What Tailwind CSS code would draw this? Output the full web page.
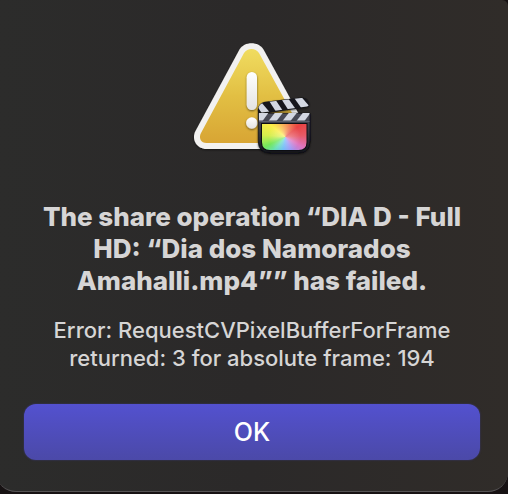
<!DOCTYPE html>
<html lang="en">
<head>
<meta charset="utf-8">
<meta name="viewport" content="width=device-width, initial-scale=1">
<title>Share failed</title>
<script src="https://cdn.jsdelivr.net/npm/@tailwindcss/browser@4"></script>
</head>
<body class="min-h-screen overflow-x-hidden bg-[#171213] font-[Inter,sans-serif]">
<main role="alertdialog" aria-labelledby="title" aria-describedby="message" class="-ml-1 flex flex-col items-center rounded-b-[20px] rounded-tr-[6px] border-b border-[#555354] bg-linear-to-r from-[#2c2c2b] via-[#2b2929] to-[#302c29] px-7 pt-[38px] pb-[31px] text-center text-[#d6d5d5]">
  <svg class="h-[124px] w-32" viewBox="188 38 128 124" aria-hidden="true">
    <defs>
      <linearGradient id="gold" x1="0" y1="0" x2="0" y2="1"><stop offset="0" stop-color="#f0dc60"/><stop offset=".5" stop-color="#e2bf43"/><stop offset="1" stop-color="#d8a534"/></linearGradient>
      <linearGradient id="mark" x1="0" y1="0" x2="0" y2="1"><stop offset="0" stop-color="#fff"/><stop offset="1" stop-color="#e4e3e2"/></linearGradient>
      <linearGradient id="slate" x1="0" y1="0" x2="0" y2="1"><stop offset="0" stop-color="#4c4e5b"/><stop offset=".4" stop-color="#393b45"/><stop offset="1" stop-color="#15161c"/></linearGradient>
      <filter id="shadow" x="-20%" y="-20%" width="140%" height="150%"><feDropShadow dx="0" dy="1" stdDeviation="1.2" flood-color="#000" flood-opacity=".55"/></filter>
      <clipPath id="arm"><path d="M258.500 112 C257.500 106.500 260 103.500 265 102.300 L301 98 C305 98 307.500 99.500 309 104 Q309 106 307 106.500 L262 112.500Z"/></clipPath>
      <clipPath id="bar"><path d="M259 113 H309.500 V120.500 H259Z"/></clipPath>
      <clipPath id="screen"><path d="M262 124 H306.500 V142 Q306.500 150 298.500 150 H270 Q262 150 262 142Z"/></clipPath>
    </defs>
    <g filter="url(#shadow)">
      <path fill="#f2f1f0" d="M239.500 49.500 C244.500 41.300 258.500 41.300 263.500 49.500 L308 131 C312.500 139.500 307 149 297.500 149 H206.500 C197 149 191 139.500 195.500 131Z"/>
    </g>
    <path fill="url(#gold)" d="M244 53 C247.500 47.700 255.500 47.700 259 53 L303 133 C305.500 138 302.500 143 297 143 H206.500 C201 143 198.300 138 201 133Z"/>
    <g filter="url(#shadow)"><rect x="246.700" y="72" width="10.300" height="38" rx="5.150" fill="url(#mark)"/><circle cx="251.800" cy="123" r="5.700" fill="url(#mark)"/></g>
    <g filter="url(#shadow)">
      <path fill="#15161b" d="M258 113 C257 106 260 103 265 101.800 L301 97.500 C305.500 97.500 308.500 99.500 309.500 104 Q309.500 106.500 307 107.200 L262 114Z"/>
      <path fill="url(#slate)" stroke="#0c0d12" stroke-width=".7" d="M258.300 113.300 H310 V141 Q310 153 298 153 H270.300 Q258.300 153 258.300 141Z"/>
    </g>
    <g clip-path="url(#arm)" fill="#d3d7e2">
      <path d="M257 106 L261.500 102.500 L269.500 112 L262 113.500Z"/>
      <path d="M268.500 100 L275 99 L283 111 L276.500 112.500Z"/>
      <path d="M281 98.500 L287.500 97.500 L296 109.500 L289 111Z"/>
      <path d="M293.500 97 L300.500 96 L310 107 L302 109Z"/>
    </g>
    <g clip-path="url(#bar)" fill="#d3d7e2">
      <path d="M258 112 H269 L262.500 121 H256Z"/>
      <path d="M275.500 112 H283.500 L276.500 121 H268.500Z"/>
      <path d="M289.500 112 H297.500 L290.500 121 H282.500Z"/>
      <path d="M303.500 112 H311 L304.500 121 H296.500Z"/>
    </g>
    <rect x="259" y="121" width="50.500" height="1" fill="#5d606c"/>
    <path fill="#0d0e13" d="M261 123 H307.500 V142 Q307.500 151 298.500 151 H270 Q261 151 261 142Z"/>
    <g clip-path="url(#screen)">
      <foreignObject x="262" y="124" width="45" height="26"><div class="h-[26px] w-[45px] bg-[radial-gradient(circle_at_50%_50%,#ffffff66,transparent_16px),conic-gradient(at_52%_50%,#f79546,#e84242_50deg,#e75a67_85deg,#de75c0_120deg,#9b94f5_155deg,#66b8f7_190deg,#67e0bb_220deg,#74e75b_245deg,#d6ee4d_275deg,#fced48_310deg,#f79546)]"></div></foreignObject>
    </g>
  </svg>
  <h1 id="title" class="mt-[39px] text-[26px] leading-8 font-extrabold">The share operation “DIA D - Full HD: “Dia dos Namorados Amahalli.mp4”” has failed.</h1>
  <p id="message" class="mt-[19px] text-[22px] leading-7 font-medium">Error: RequestCVPixelBufferForFrame returned: 3 for absolute frame: 194</p>
  <button type="button" class="mt-8 h-14 w-full rounded-xl bg-linear-to-b from-[#5351cf] to-[#4b49a8] text-[25px] leading-8 font-medium text-white shadow-[0_0_2px_#3b397c]">OK</button>
</main>
</body>
</html>
